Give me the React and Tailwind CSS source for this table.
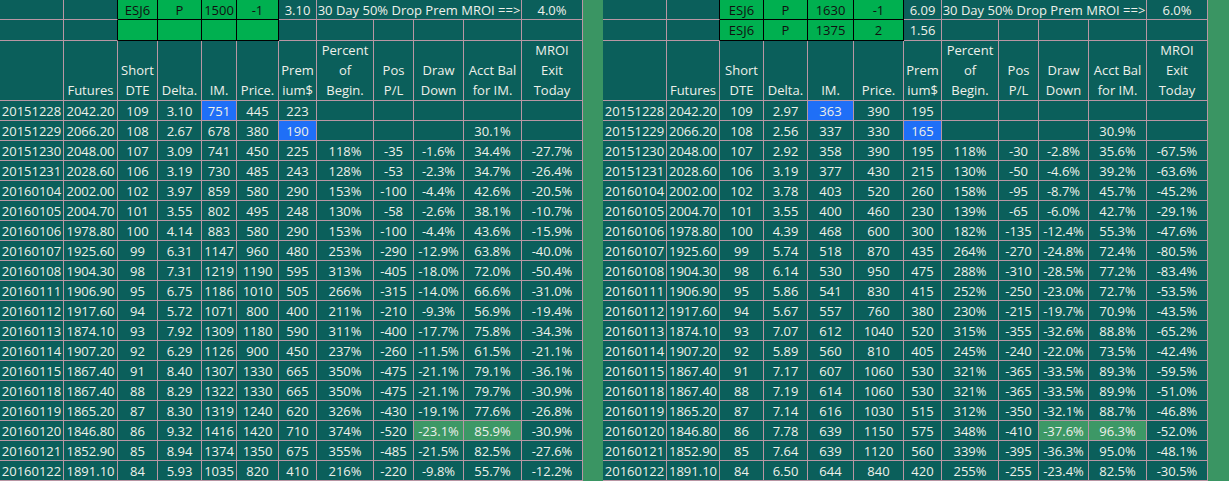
import React from "react";

const LINE = "border-r border-b border-r-[#b996a4] border-b-[#b996a4]";
const BLACK = "border-r border-b border-r-black border-b-black";
const BLACK_R = "border-r border-b border-r-black border-b-[#b996a4]";

const leftData = [
  ["20151228","2042.20","109","3.10","751","445","223","","","","",""],
  ["20151229","2066.20","108","2.67","678","380","190","","","","30.1%",""],
  ["20151230","2048.00","107","3.09","741","450","225","118%","-35","-1.6%","34.4%","-27.7%"],
  ["20151231","2028.60","106","3.19","730","485","243","128%","-53","-2.3%","34.7%","-26.4%"],
  ["20160104","2002.00","102","3.97","859","580","290","153%","-100","-4.4%","42.6%","-20.5%"],
  ["20160105","2004.70","101","3.55","802","495","248","130%","-58","-2.6%","38.1%","-10.7%"],
  ["20160106","1978.80","100","4.14","883","580","290","153%","-100","-4.4%","43.6%","-15.9%"],
  ["20160107","1925.60","99","6.31","1147","960","480","253%","-290","-12.9%","63.8%","-40.0%"],
  ["20160108","1904.30","98","7.31","1219","1190","595","313%","-405","-18.0%","72.0%","-50.4%"],
  ["20160111","1906.90","95","6.75","1186","1010","505","266%","-315","-14.0%","66.6%","-31.0%"],
  ["20160112","1917.60","94","5.72","1071","800","400","211%","-210","-9.3%","56.9%","-19.4%"],
  ["20160113","1874.10","93","7.92","1309","1180","590","311%","-400","-17.7%","75.8%","-34.3%"],
  ["20160114","1907.20","92","6.29","1126","900","450","237%","-260","-11.5%","61.5%","-21.1%"],
  ["20160115","1867.40","91","8.40","1307","1330","665","350%","-475","-21.1%","79.1%","-36.1%"],
  ["20160118","1867.40","88","8.29","1322","1330","665","350%","-475","-21.1%","79.7%","-30.9%"],
  ["20160119","1865.20","87","8.30","1319","1240","620","326%","-430","-19.1%","77.6%","-26.8%"],
  ["20160120","1846.80","86","9.32","1416","1420","710","374%","-520","-23.1%","85.9%","-30.9%"],
  ["20160121","1852.90","85","8.94","1374","1350","675","355%","-485","-21.5%","82.5%","-27.6%"],
  ["20160122","1891.10","84","5.93","1035","820","410","216%","-220","-9.8%","55.7%","-12.2%"],
];

const rightData = [
  ["20151228","2042.20","109","2.97","363","390","195","","","","",""],
  ["20151229","2066.20","108","2.56","337","330","165","","","","30.9%",""],
  ["20151230","2048.00","107","2.92","358","390","195","118%","-30","-2.8%","35.6%","-67.5%"],
  ["20151231","2028.60","106","3.19","377","430","215","130%","-50","-4.6%","39.2%","-63.6%"],
  ["20160104","2002.00","102","3.78","403","520","260","158%","-95","-8.7%","45.7%","-45.2%"],
  ["20160105","2004.70","101","3.55","400","460","230","139%","-65","-6.0%","42.7%","-29.1%"],
  ["20160106","1978.80","100","4.39","468","600","300","182%","-135","-12.4%","55.3%","-47.6%"],
  ["20160107","1925.60","99","5.74","518","870","435","264%","-270","-24.8%","72.4%","-80.5%"],
  ["20160108","1904.30","98","6.14","530","950","475","288%","-310","-28.5%","77.2%","-83.4%"],
  ["20160111","1906.90","95","5.86","541","830","415","252%","-250","-23.0%","72.7%","-53.5%"],
  ["20160112","1917.60","94","5.67","557","760","380","230%","-215","-19.7%","70.9%","-43.5%"],
  ["20160113","1874.10","93","7.07","612","1040","520","315%","-355","-32.6%","88.8%","-65.2%"],
  ["20160114","1907.20","92","5.89","560","810","405","245%","-240","-22.0%","73.5%","-42.4%"],
  ["20160115","1867.40","91","7.17","607","1060","530","321%","-365","-33.5%","89.3%","-59.5%"],
  ["20160118","1867.40","88","7.19","614","1060","530","321%","-365","-33.5%","89.9%","-51.0%"],
  ["20160119","1865.20","87","7.14","616","1030","515","312%","-350","-32.1%","88.7%","-46.8%"],
  ["20160120","1846.80","86","7.78","639","1150","575","348%","-410","-37.6%","96.3%","-52.0%"],
  ["20160121","1852.90","85","7.64","639","1120","560","339%","-395","-36.3%","95.0%","-48.1%"],
  ["20160122","1891.10","84","6.50","644","840","420","255%","-255","-23.4%","82.5%","-30.5%"],
];

const headers = [
  [""],
  ["Futures"],
  ["Short", "DTE"],
  ["Delta."],
  ["IM."],
  ["Price."],
  ["Prem", "ium$"],
  ["Percent", "of", "Begin."],
  ["Pos", "P/L"],
  ["Draw", "Down"],
  ["Acct Bal", "for IM."],
  ["MROI", "Exit", "Today"],
];

function Cell({ children, border = LINE, bg = "", extra = "" }) {
  return (
    <div
      className={`box-border flex items-center justify-center whitespace-nowrap leading-[20px] ${border} ${bg} ${extra}`}
    >
      {children}
    </div>
  );
}

function Sheet({ cols, top1, top2, g1, g2, mroi, data }) {
  return (
    <div className={`grid ${cols} grid-rows-[20px_21px_60px_repeat(19,20px)]`}>
      {/* Row 1 */}
      <Cell />
      <Cell border={BLACK_R} />
      {top1.map((t, i) => (
        <Cell key={"t1" + i} border={BLACK} bg="bg-[#00b050] text-[#111]">
          {t}
        </Cell>
      ))}
      <Cell>{g1}</Cell>
      <Cell extra="col-span-4">30 Day 50% Drop Prem MROI ==&gt;</Cell>
      <Cell>{mroi}</Cell>
      {/* Row 2 */}
      <Cell />
      <Cell border={BLACK_R} />
      {top2.map((t, i) => (
        <Cell key={"t2" + i} border={BLACK} bg="bg-[#00b050] text-[#111]">
          {t}
        </Cell>
      ))}
      <Cell>{g2}</Cell>
      <Cell />
      <Cell />
      <Cell />
      <Cell />
      <Cell />
      {/* Header */}
      {headers.map((h, i) => (
        <div
          key={"h" + i}
          className={`box-border flex flex-col items-center justify-end text-center leading-[20px] whitespace-nowrap ${LINE}`}
        >
          {h.map((l, j) => (
            <span key={j}>{l}</span>
          ))}
        </div>
      ))}
      {/* Data */}
      {data.map((row, r) =>
        row.map((v, c) => {
          let bg = "";
          if (r === 0 && c === 4) bg = "bg-[#1f6ff7]";
          if (r === 1 && c === 6) bg = "bg-[#1f6ff7]";
          if (r === 16 && (c === 9 || c === 10)) bg = "bg-[#3d9866]";
          return (
            <Cell key={r + "-" + c} bg={bg}>
              {v}
            </Cell>
          );
        })
      )}
    </div>
  );
}

export default function App() {
  return (
    <div
      className="flex w-[1229px] h-[481px] overflow-hidden bg-[#0b5f5b] text-[#eef0ea] text-[13px]"
      style={{ fontFamily: '"Open Sans", "Liberation Sans", sans-serif' }}
    >
      <Sheet
        cols="grid-cols-[64px_54px_40px_44px_35px_42px_38px_57px_40px_50px_58px_61px]"
        top1={["ESJ6", "P", "1500", "-1"]}
        top2={["", "", "", ""]}
        g1="3.10"
        g2=""
        mroi="4.0%"
        data={leftData}
      />
      <div className="w-[20px] h-[481px] shrink-0 bg-[#3a9563]" />
      <Sheet
        cols="grid-cols-[64px_53px_44px_44px_46px_50px_38px_57px_40px_50px_58px_61px]"
        top1={["ESJ6", "P", "1630", "-1"]}
        top2={["ESJ6", "P", "1375", "2"]}
        g1="6.09"
        g2="1.56"
        mroi="6.0%"
        data={rightData}
      />
      <div className="w-[21px] h-[481px] shrink-0 bg-[#3a9563]" />
    </div>
  );
}
